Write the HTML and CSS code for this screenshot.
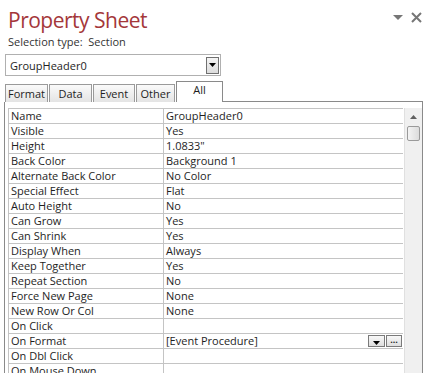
FILE: index.html
```html
<!DOCTYPE html>
<html>
<head>
<meta charset="utf-8">
<link rel="stylesheet" href="styles.css">
</head>
<body>
<div class="sheet">
  <div class="titlebar">
    <div class="title">Property Sheet</div>
    <div class="winctl">
      <svg width="10" height="6" viewBox="0 0 10 6"><path d="M0 0H10L5 5Z" fill="#767676"/></svg>
      <svg width="11" height="11" viewBox="0 0 11 11"><path d="M1 1L10 10M10 1L1 10" stroke="#767676" stroke-width="2"/></svg>
    </div>
  </div>
  <div class="seltype">Selection type:&nbsp;&nbsp;Section</div>
  <div class="combo">
    <span class="combo-text">GroupHeader0</span>
    <span class="combo-btn"><svg width="7" height="4" viewBox="0 0 7 4"><path d="M0 0H7L3.5 4Z" fill="#000"/></svg></span>
  </div>
  <div class="tabs">
    <div class="tab">Format</div>
    <div class="tab">Data</div>
    <div class="tab">Event</div>
    <div class="tab">Other</div>
    <div class="tab active">All</div>
    <div class="tabfill"></div>
  </div>
  <div class="panel">
    <div class="grid">
      <div class="row"><div class="k">Name</div><div class="v">GroupHeader0</div></div>
      <div class="row"><div class="k">Visible</div><div class="v">Yes</div></div>
      <div class="row"><div class="k">Height</div><div class="v">1.0833"</div></div>
      <div class="row"><div class="k">Back Color</div><div class="v">Background 1</div></div>
      <div class="row"><div class="k">Alternate Back Color</div><div class="v">No Color</div></div>
      <div class="row"><div class="k">Special Effect</div><div class="v">Flat</div></div>
      <div class="row"><div class="k">Auto Height</div><div class="v">No</div></div>
      <div class="row"><div class="k">Can Grow</div><div class="v">Yes</div></div>
      <div class="row"><div class="k">Can Shrink</div><div class="v">Yes</div></div>
      <div class="row"><div class="k">Display When</div><div class="v">Always</div></div>
      <div class="row"><div class="k">Keep Together</div><div class="v">Yes</div></div>
      <div class="row"><div class="k">Repeat Section</div><div class="v">No</div></div>
      <div class="row"><div class="k">Force New Page</div><div class="v">None</div></div>
      <div class="row"><div class="k">New Row Or Col</div><div class="v">None</div></div>
      <div class="row"><div class="k">On Click</div><div class="v"></div></div>
      <div class="row"><div class="k">On Format</div><div class="v sel"><span class="vt">[Event Procedure]</span><span class="mini dd"><svg width="7" height="4" viewBox="0 0 7 4"><path d="M0 0H7L3.5 4Z" fill="#000"/></svg></span><span class="mini dots">...</span></div></div>
      <div class="row"><div class="k">On Dbl Click</div><div class="v"></div></div>
      <div class="row"><div class="k">On Mouse Down</div><div class="v"></div></div>
    </div>
    <div class="scroll">
      <div class="up"><svg width="7" height="4" viewBox="0 0 7 4"><path d="M0 4H7L3.5 0Z" fill="#606060"/></svg></div>
      <div class="thumb"></div>
    </div>
  </div>
</div>
</body>
</html>
```

FILE: styles.css
```css
html, body {
  margin: 0;
  padding: 0;
  background: #fff;
  overflow: hidden;
}
body {
  font-family: "Open Sans", "Noto Sans", sans-serif;
  color: #1e1e1e;
  width: 432px;
  height: 373px;
}
.sheet {
  display: flex;
  flex-direction: column;
}
.titlebar {
  display: flex;
  align-items: flex-start;
  justify-content: space-between;
  padding: 6px 10px 0 8px;
  height: 34px;
  box-sizing: border-box;
}
.title {
  font-size: 21px;
  line-height: 28px;
  color: #a4373a;
  letter-spacing: -0.5px;
}
.winctl {
  display: flex;
  align-items: center;
  gap: 8px;
  padding-top: 6px;
}
.seltype {
  font-size: 11px;
  line-height: 16px;
  padding-left: 8px;
  color: #333;
}
.combo {
  margin: 4px 0 0 5px;
  width: 216px;
  height: 22px;
  box-sizing: border-box;
  border: 1px solid #b0b0b0;
  display: flex;
  align-items: center;
  justify-content: space-between;
  padding: 0 1px 0 4px;
  font-size: 11px;
}
.combo-btn {
  width: 13px;
  height: 17px;
  box-sizing: border-box;
  border: 1px solid #707070;
  background: linear-gradient(#f4f4f4, #dcdcdc);
  display: flex;
  align-items: center;
  justify-content: center;
}
.tabs {
  display: flex;
  align-items: flex-end;
  margin-top: 5px;
  padding-left: 5px;
  height: 21px;
}
.tab {
  height: 18px;
  box-sizing: border-box;
  border: 1px solid #9a9a9a;
  border-bottom: none;
  margin-right: 1px;
  padding: 0;
  font-size: 11px;
  line-height: 17px;
  background: linear-gradient(#fafafa, #e4e4e4);
  text-align: center;
}
.tab:nth-child(1) { width: 43px; }
.tab:nth-child(2) { width: 43px; }
.tab:nth-child(3) { width: 42px; }
.tab:nth-child(4) { width: 39px; }
.tab.active {
  width: 47px;
  height: 21px;
  background: #fff;
  border-color: #8a8a8a;
  line-height: 15px;
  margin-right: 0;
}
.tabfill {
  flex: 1;
  border-bottom: 1px solid #8a8a8a;
  margin-right: 9px;
}
.panel {
  margin-left: 4px;
  width: 419px;
  box-sizing: border-box;
  border-left: 1px solid #8a8a8a;
  border-right: 1px solid #8a8a8a;
  display: flex;
  padding: 6px 0 0 3px;
  height: 300px;
}
.grid {
  width: 397px;
  border-top: 1px solid #c4c4c4;
  border-left: 1px solid #c4c4c4;
  box-sizing: border-box;
}
.row {
  display: flex;
  height: 15px;
  box-sizing: border-box;
  border-bottom: 1px solid #c4c4c4;
  font-size: 11px;
  line-height: 14px;
}
.k {
  width: 152px;
  border-right: 1px solid #c4c4c4;
  padding-left: 2px;
  white-space: nowrap;
  overflow: hidden;
}
.v {
  flex: 1;
  padding-left: 2px;
  white-space: nowrap;
  overflow: hidden;
  display: flex;
  align-items: center;
}
.vt { flex: 1; }
.mini {
  width: 17px;
  height: 12px;
  box-sizing: border-box;
  border: 1px solid #7a7a7a;
  background: linear-gradient(#f8f8f8, #dedede);
  display: flex;
  align-items: center;
  justify-content: center;
  margin-left: 1px;
}
.mini.dd { align-items: flex-end; padding-bottom: 1px; }
.dots {
  width: 16px;
  font-size: 9px;
  line-height: 8px;
  font-weight: bold;
  align-items: flex-start;
  margin-right: 1px;
}
.scroll {
  width: 17px;
  margin-left: 1px;
  background: #f0f0f0;
  border-left: 1px solid #e0e0e0;
  display: flex;
  flex-direction: column;
  align-items: center;
}
.up {
  height: 18px;
  display: flex;
  align-items: center;
  justify-content: center;
}
.thumb {
  width: 13px;
  height: 15px;
  box-sizing: border-box;
  border: 1px solid #9a9a9a;
  border-radius: 2px;
  background: linear-gradient(90deg, #f4f4f4, #dcdcdc);
}
```
